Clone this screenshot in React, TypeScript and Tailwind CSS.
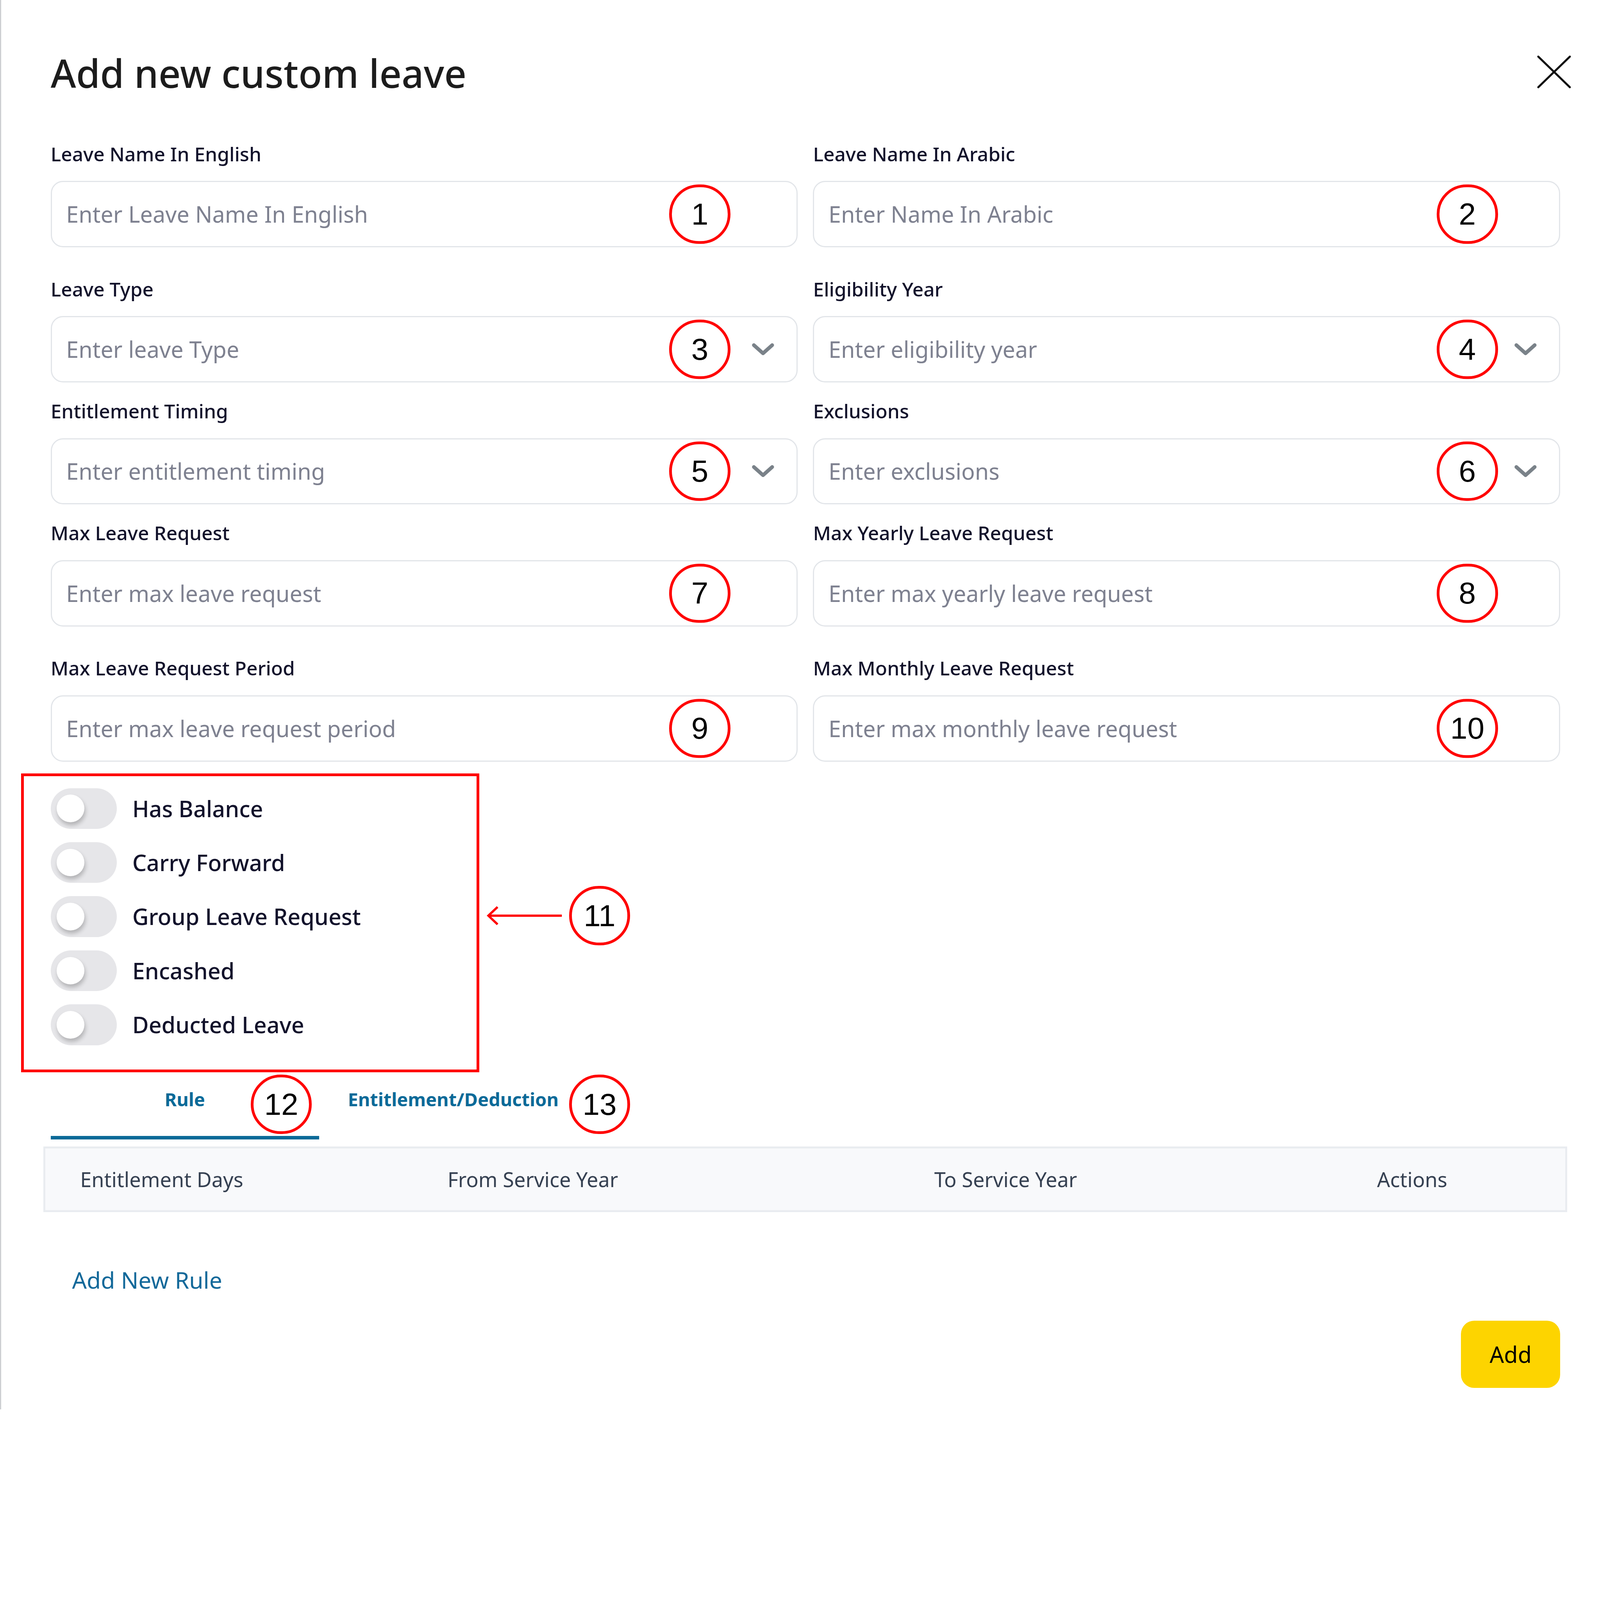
import React, { useEffect, useState } from 'react';

interface Field {
  label: string;
  placeholder: string;
  badge: number;
  select?: boolean;
}

const rows: { fields: Field[]; gap: string }[] = [
  {
    gap: 'mb-[29px]',
    fields: [
      { label: 'Leave Name In English', placeholder: 'Enter Leave Name In English', badge: 1 },
      { label: 'Leave Name In Arabic', placeholder: 'Enter Name In Arabic', badge: 2 },
    ],
  },
  {
    gap: 'mb-[16px]',
    fields: [
      { label: 'Leave Type', placeholder: 'Enter leave Type', badge: 3, select: true },
      { label: 'Eligibility Year', placeholder: 'Enter eligibility year', badge: 4, select: true },
    ],
  },
  {
    gap: 'mb-[16px]',
    fields: [
      { label: 'Entitlement Timing', placeholder: 'Enter entitlement timing', badge: 5, select: true },
      { label: 'Exclusions', placeholder: 'Enter exclusions', badge: 6, select: true },
    ],
  },
  {
    gap: 'mb-[29px]',
    fields: [
      { label: 'Max Leave Request', placeholder: 'Enter max leave request', badge: 7 },
      { label: 'Max Yearly Leave Request', placeholder: 'Enter max yearly leave request', badge: 8 },
    ],
  },
  {
    gap: 'mb-[26px]',
    fields: [
      { label: 'Max Leave Request Period', placeholder: 'Enter max leave request period', badge: 9 },
      { label: 'Max Monthly Leave Request', placeholder: 'Enter max monthly leave request', badge: 10 },
    ],
  },
];

const toggles = ['Has Balance', 'Carry Forward', 'Group Leave Request', 'Encashed', 'Deducted Leave'];

const columns = ['Entitlement Days', 'From Service Year', 'To Service Year', 'Actions'];

// design is laid out at 1568px wide, scaled up to fill the window
const DESIGN_WIDTH = 1568;

// red numbered annotation circle
const Badge = ({ n, className = '' }: { n: number; className?: string }) => (
  <div
    className={`w-[60px] h-[58px] rounded-full border-[3px] border-[#ff0000] flex items-center justify-center text-[30px] leading-none font-normal text-black font-['Liberation_Sans',Arial,sans-serif] ${className}`}
  >
    {n}
  </div>
);

const Chevron = () => (
  <svg width="24" height="14" viewBox="0 0 24 14" fill="none">
    <polyline points="3,3 12,11 21,3" stroke="#7a8289" strokeWidth="3.6" strokeLinecap="round" strokeLinejoin="round" />
  </svg>
);

const FormField = ({ field, col }: { field: Field; col: number }) => (
  <div className="flex flex-col">
    <label className="text-[19px] leading-[24px] font-medium text-[#12122b]">{field.label}</label>
    <div className="relative mt-[14.5px]">
      <input
        readOnly
        placeholder={field.placeholder}
        className="w-full h-[65px] rounded-[12px] border-[1.5px] border-[#e2e5e9] bg-white pl-[14px] pr-[90px] text-[22px] text-[#12122b] placeholder:text-[#7e8190] outline-none"
      />
      <Badge
        n={field.badge}
        className={`absolute top-1/2 -translate-y-1/2 ${col === 0 ? 'right-[66px]' : 'right-[61px]'}`}
      />
      {field.select && (
        <div className="absolute right-[22px] top-1/2 -translate-y-1/2 flex">
          <Chevron />
        </div>
      )}
    </div>
  </div>
);

const Toggle = ({ label }: { label: string }) => (
  <div className="flex items-center h-[40px]">
    <div className="relative w-[65px] h-[40px] rounded-full bg-[#e6e6e9]">
      <div className="absolute left-[6px] top-[6.5px] w-[27px] h-[27px] rounded-full bg-white shadow-[1px_3px_4px_rgba(0,0,0,0.22)]" />
    </div>
    <span className="ml-[15px] text-[22px] leading-[40px] font-medium text-[#12122b]">{label}</span>
  </div>
);

export default function App() {
  const [zoom, setZoom] = useState(() => window.innerWidth / DESIGN_WIDTH);

  useEffect(() => {
    const onResize = () => setZoom(window.innerWidth / DESIGN_WIDTH);
    window.addEventListener('resize', onResize);
    return () => window.removeEventListener('resize', onResize);
  }, []);

  return (
    <div
      className="w-[1568px] h-[1381px] bg-white overflow-hidden border-l-[1.5px] border-[#cdcfd2] font-['Noto_Sans',sans-serif]"
      style={{ zoom }}
    >
      <div className="flex flex-col pl-[48.5px] pr-[39px] pt-[48.5px]">
        <div className="flex justify-between items-start">
          <h1 className="text-[38px] leading-[46px] font-medium text-[#1c1c1c]">Add new custom leave</h1>
          <svg className="mt-[5.5px] -mr-[11px]" width="34" height="33" viewBox="0 0 34 33" fill="none">
            <line x1="1.5" y1="1.5" x2="32.5" y2="31.5" stroke="#111" strokeWidth="2" strokeLinecap="round" />
            <line x1="32.5" y1="1.5" x2="1.5" y2="31.5" stroke="#111" strokeWidth="2" strokeLinecap="round" />
          </svg>
        </div>

        <div className="mt-[44.4px] flex flex-col">
          {rows.map((row, i) => (
            <div key={i} className={`grid grid-cols-2 gap-x-[15px] ${row.gap}`}>
              {row.fields.map((f, c) => (
                <FormField key={f.badge} field={f} col={c} />
              ))}
            </div>
          ))}
        </div>

        {/* switches with annotation box */}
        <div className="flex items-center">
          <div className="relative flex flex-col gap-[13px]">
            {toggles.map((t) => (
              <Toggle key={t} label={t} />
            ))}
            <div className="absolute -left-[29px] -top-[14.5px] w-[449px] h-[293px] border-[3px] border-[#ff0000] pointer-events-none" />
          </div>
          <div className="ml-[123px] -mt-[2px] flex items-center">
            <svg width="76" height="20" viewBox="0 0 76 20" fill="none">
              <line x1="2" y1="10" x2="74" y2="10" stroke="#ff0000" strokeWidth="2.2" />
              <polyline points="11,1.5 2,10 11,18.5" stroke="#ff0000" strokeWidth="2.2" fill="none" />
            </svg>
            <Badge n={11} className="ml-[5px]" />
          </div>
        </div>

        {/* tabs */}
        <div className="mt-[25px] flex items-end">
          <div className="relative w-[263px] pt-[16px] pb-[24px] border-b-[3.5px] border-[#0b6a98] text-center text-[18px] leading-[24px] font-bold text-[#0b6a98]">
            Rule
            <Badge n={12} className="absolute left-[196px] top-[4px]" />
          </div>
          <div className="relative w-[263px] pt-[16px] pb-[24px] border-b-[3.5px] border-transparent text-center text-[18px] leading-[24px] font-bold text-[#0b6a98]">
            Entitlement/Deduction
            <Badge n={13} className="absolute left-[245px] top-[4px]" />
          </div>
        </div>

        {/* rules table header */}
        <div className="mt-[7px] -mx-[7px] h-[64px] border-2 border-[#e9ecf0] bg-[#f8f9fb] grid grid-cols-[360px_477px_434px_1fr] items-center">
          {columns.map((c) => (
            <div key={c} className="pl-[34px] text-[20px] leading-[28px] text-[#364152]">
              {c}
            </div>
          ))}
        </div>

        <div className="mt-[51.4px] ml-[21px] text-[22.5px] leading-[30px] text-[#13699a]">Add New Rule</div>

        <div className="mt-[25px] flex justify-end">
          <button className="h-[66px] px-[28px] rounded-[13px] bg-[#fdd400] text-[22px] leading-[30px] text-black">
            Add
          </button>
        </div>
      </div>
    </div>
  );
}
